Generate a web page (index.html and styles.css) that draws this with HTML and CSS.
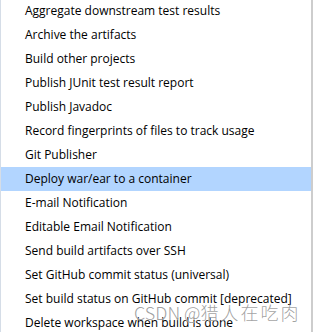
FILE: index.html
```html
<!DOCTYPE html>
<html lang="en">
<head>
    <meta charset="UTF-8">
    <meta name="viewport" content="width=device-width, initial-scale=1.0">
    <title>Post-build Actions</title>
    <link rel="stylesheet" href="styles.css">
</head>
<body>
    <ul class="menu">
        <li class="menu-item">Aggregate downstream test results</li>
        <li class="menu-item">Archive the artifacts</li>
        <li class="menu-item">Build other projects</li>
        <li class="menu-item">Publish JUnit test result report</li>
        <li class="menu-item">Publish Javadoc</li>
        <li class="menu-item">Record fingerprints of files to track usage</li>
        <li class="menu-item">Git Publisher</li>
        <li class="menu-item selected">Deploy war/ear to a container</li>
        <li class="menu-item">E-mail Notification</li>
        <li class="menu-item">Editable Email Notification</li>
        <li class="menu-item">Send build artifacts over SSH</li>
        <li class="menu-item">Set GitHub commit status (universal)</li>
        <li class="menu-item">Set build status on GitHub commit [deprecated]</li>
        <li class="menu-item">Delete workspace when build is done</li>
    </ul>
    <div class="watermark">CSDN @<span class="watermark-cjk">猎人在吃肉</span></div>
</body>
</html>
```

FILE: styles.css
```css
body {
    margin: 0;
    background: #fff;
    font-family: "Open Sans", "Noto Sans CJK SC", sans-serif;
    overflow: hidden;
}
.menu {
    list-style: none;
    margin: -1px 0 0 0;
    padding: 0;
    width: 310px;
    border-left: 1px solid #d5dde7;
    border-right: 2px solid #cdcdcd;
}
.menu-item {
    height: 24px;
    line-height: 24px;
    padding-left: 24px;
    font-size: 12px;
    color: #000;
    white-space: nowrap;
}
.selected {
    background-color: #b2d5ff;
}
.watermark {
    position: absolute;
    left: 134px;
    top: 299px;
    font-family: "Noto Sans CJK SC", sans-serif;
    font-size: 18px;
    font-weight: 300;
    color: rgba(120, 120, 120, 0.7);
    text-shadow: 0 0 1px #fff;
    white-space: nowrap;
}
.watermark-cjk {
    letter-spacing: 2px;
}
```
